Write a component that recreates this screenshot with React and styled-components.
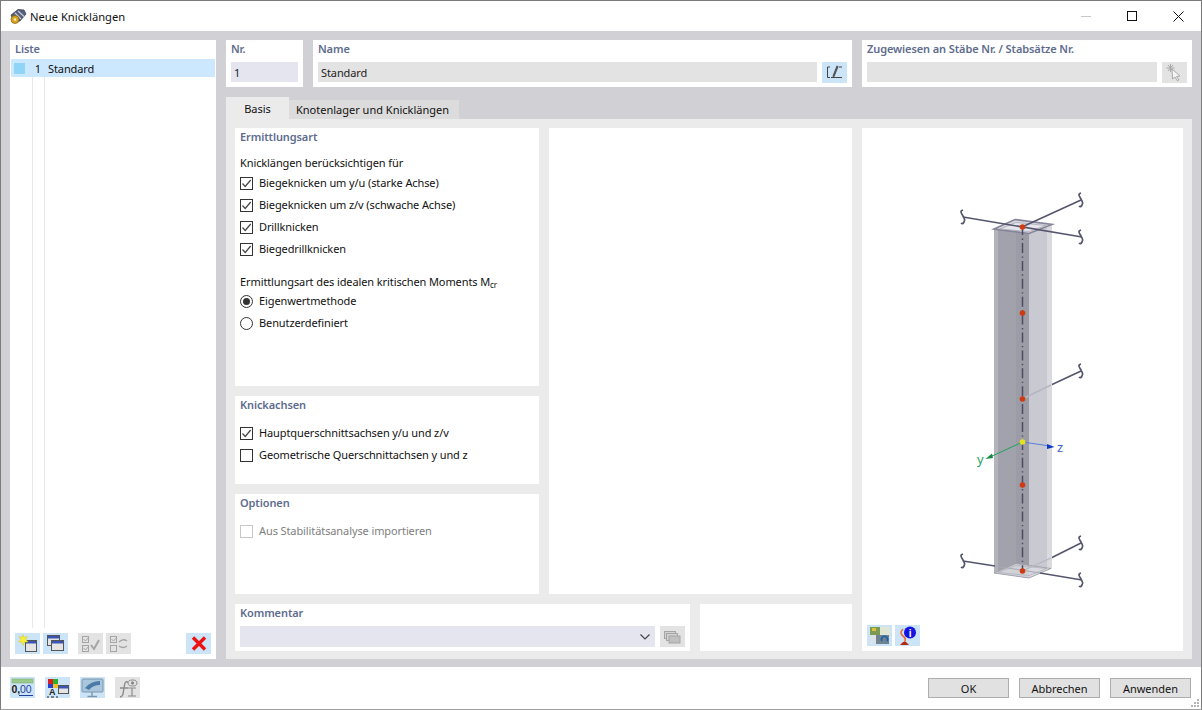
import styled, { createGlobalStyle } from "styled-components";

const Global = createGlobalStyle`
  html, body { margin: 0; padding: 0; background: #fff; }
  * { box-sizing: border-box; }
`;

const Win = styled.div`
  width: 1202px;
  height: 710px;
  position: relative;
  display: flex;
  flex-direction: column;
  overflow: hidden;
  background: #fff;
  border: 1px solid #7c7c7c;
  border-bottom-color: #a0a0a0;
  font-family: "Noto Sans", sans-serif;
  font-size: 11px;
  letter-spacing: -0.1px;
  color: #111;
`;

const TitleBar = styled.div`
  height: 30px;
  display: flex;
  align-items: center;
  padding-left: 8px;
  gap: 3px;
  font-size: 11.2px;
  letter-spacing: 0;
`;

const WinButtons = styled.div`
  margin-left: auto;
  display: flex;
`;

const WinButton = styled.div`
  width: 46px;
  height: 30px;
  display: flex;
  align-items: center;
  justify-content: center;
`;

const Body = styled.div`
  height: 636px;
  background: #d0d0d5;
  padding: 9px 9px 8px;
  display: grid;
  grid-template-columns: 206px 1fr;
  gap: 10px;
`;

const Panel = styled.div`
  background: #fff;
  position: relative;
  display: flex;
  flex-direction: column;
`;

const ListPanel = styled(Panel)`
  padding: 1px;
`;

const Caption = styled.div`
  color: #5e6c8e;
  font-weight: 600;
  height: 17px;
  line-height: 17px;
  padding-left: 5px;
  white-space: nowrap;
`;

const ListCaption = styled(Caption)`
  height: 15px;
  line-height: 15px;
  margin-bottom: 3px;
  padding-left: 4px;
`;

const ListBody = styled.div`
  flex: 1;
  display: flex;
  flex-direction: column;
  background: linear-gradient(#e8e8e8, #e8e8e8) 21px 0 / 1px 569px no-repeat,
    linear-gradient(#e8e8e8, #e8e8e8) 33px 0 / 1px 569px no-repeat;
`;

const ListRow = styled.div`
  height: 18px;
  background: #cce8ff;
  display: flex;
  align-items: center;
  padding-left: 3px;
`;

const Swatch = styled.span`
  width: 11px;
  height: 11px;
  background: #90d5f7;
`;

const RowNo = styled.span`
  width: 16px;
  text-align: right;
  margin-right: 7px;
`;

const ListTools = styled.div`
  height: 21px;
  margin: 0 4px 4px;
  display: flex;
  gap: 3px;
`;

const IconBtn = styled.div`
  width: 25px;
  height: 21px;
  flex: none;
  display: flex;
  align-items: center;
  justify-content: center;
  background: ${(p) => (p.$off ? "#e3e3e3" : "#cbe4f8")};
  margin-left: ${(p) => p.$gap || 0}px;
`;

const Main = styled.div`
  display: flex;
  flex-direction: column;
  min-width: 0;
`;

const HeadRow = styled.div`
  display: grid;
  grid-template-columns: 77px 539px 330px;
  gap: 10px;
  height: 47px;
`;

const FieldRow = styled.div`
  display: flex;
  gap: 5px;
  padding: 0 5px;
`;

const Input = styled.div`
  flex: 1;
  height: 20px;
  line-height: 21px;
  padding-left: 3px;
  background: ${(p) => (p.$tint ? "#e5e5ef" : "#e3e3e3")};
  color: #222;
  margin-top: 5px;
`;

const HeadBtn = styled(IconBtn)`
  margin-top: 5px;
`;

const TabStrip = styled.div`
  display: flex;
  align-items: flex-end;
  height: 22px;
  margin-top: 10px;
`;

const Tab = styled.div`
  height: ${(p) => (p.$active ? 22 : 19)}px;
  width: ${(p) => (p.$active ? 63 : 170)}px;
  padding-right: ${(p) => (p.$active ? 0 : 3)}px;
  background: ${(p) => (p.$active ? "#ebebeb" : "#dcdcdc")};
  letter-spacing: 0;
  display: flex;
  align-items: center;
  justify-content: center;
`;

const TabPage = styled.div`
  flex: 1;
  background: #ebebeb;
  padding: 9px 9px 8px;
  display: grid;
  grid-template-columns: 304px 303px 321px;
  grid-template-rows: 258px 88px 100px 47px;
  column-gap: 10px;
  row-gap: 10px;
`;

const CenterBlank = styled(Panel)`
  grid-column: 2;
  grid-row: 1 / 4;
`;

const Preview = styled(Panel)`
  grid-column: 3;
  grid-row: 1 / 5;
`;

const CommentPanel = styled.div`
  grid-column: 1 / 3;
  grid-row: 4;
  display: grid;
  grid-template-columns: 455px 152px;
  gap: 10px;
`;

const Options = styled.div`
  display: flex;
  flex-direction: column;
  padding: ${(p) => p.$top || 0}px 0 0 5px;
`;

const Label = styled.div`
  height: 16px;
  line-height: 16px;
  white-space: nowrap;
  margin-top: ${(p) => p.$gap || 0}px;
  margin-bottom: ${(p) => p.$after || 0}px;
`;

const Choice = styled.div`
  height: 22px;
  padding-bottom: 2px;
  display: flex;
  align-items: center;
  gap: 6px;
  white-space: nowrap;
  color: ${(p) => (p.$off ? "#7e7e7e" : "inherit")};
`;

const Box = styled.span`
  width: 13px;
  height: 13px;
  flex: none;
  margin-bottom: -2px;
  border: 1px solid ${(p) => (p.$off ? "#c8c8c8" : "#333")};
  display: flex;
  align-items: center;
  justify-content: center;
`;

const Radio = styled(Box)`
  border-radius: 50%;
`;

const Dot = styled.span`
  width: 7px;
  height: 7px;
  border-radius: 50%;
  background: #333;
`;

const Sub = styled.sub`
  font-size: 8px;
  line-height: 0;
  vertical-align: -2px;
`;

const Combo = styled(Input)`
  height: 21px;
  margin-top: 5px;
  display: flex;
  align-items: center;
  justify-content: flex-end;
  padding-right: 5px;
`;

const DrawArea = styled.svg`
  display: block;
  flex: 1;
  width: 321px;
  height: 496px;
`;

const PreviewTools = styled.div`
  display: flex;
  gap: 3px;
  padding: 1px 5px 5px;
  height: 27px;
`;

const Footer = styled.div`
  flex: 1;
  display: flex;
  align-items: center;
  padding: 0 10px 1px 9px;
  gap: 10px;
`;

const FootBtn = styled.button`
  width: 81px;
  height: 20px;
  padding: 0;
  margin-top: 1px;
  font: inherit;
  letter-spacing: 0;
  color: #111;
  background: #e1e1e1;
  border: 1px solid #adadad;
  margin-left: ${(p) => (p.$first ? "auto" : "0")};
`;

const Grip = styled.svg`
  position: absolute;
  right: 1px;
  bottom: 1px;
`;

const Check = () => (
  <svg width="11" height="11" viewBox="0 0 11 11">
    <path d="M1.5 5.5 L4.2 8.5 L9.7 2" fill="none" stroke="#444" strokeWidth="1.2" />
  </svg>
);

const CheckItem = ({ children, off, on = true }) => (
  <Choice $off={off}>
    <Box $off={off}>{on && !off && <Check />}</Box>
    {children}
  </Choice>
);

const WinGlyph = ({ x = 0, y = 0, w = 14, h = 12 }) => (
  <g>
    <rect x={x} y={y} width={w} height={h} fill="#e4e4e4" stroke="#555" />
    <rect x={x + 0.5} y={y + 0.5} width={w - 1} height="2.5" fill="#3b55b5" />
  </g>
);

const NewIcon = () => (
  <svg width="20" height="19" viewBox="0 0 20 19">
    <WinGlyph x={7.5} y={6.5} w={11} h={11} />
    <path d="M5 0.5 L6.2 3.5 L9.5 2.5 L7.8 5.5 L10 8 L6.7 8 L5 11.5 L3.8 8 L0.5 8 L2.8 5.5 L1 2.5 L4 3.5 Z" fill="#f7ee3c" stroke="#d8c820" strokeWidth=".5" />
  </svg>
);

const CopyIcon = () => (
  <svg width="20" height="19" viewBox="0 0 20 19">
    <WinGlyph x={1.5} y={1.5} w={12} h={10} />
    <WinGlyph x={5.5} y={6.5} w={12} h={10} />
  </svg>
);

const CheckAllIcon = () => (
  <svg width="20" height="19" viewBox="0 0 20 19" fill="none" stroke="#a5a5a5">
    <rect x="1.5" y="2.5" width="6" height="6" />
    <rect x="1.5" y="11.5" width="6" height="6" />
    <path d="M2.5 5 L4.5 7 L8 3 M2.5 14 L4.5 16 L8 12" />
    <path d="M10 11 L13 15 L18 6" strokeWidth="2" />
  </svg>
);

const CheckSwapIcon = () => (
  <svg width="20" height="19" viewBox="0 0 20 19" fill="none" stroke="#a5a5a5">
    <rect x="1.5" y="2.5" width="6" height="6" />
    <rect x="1.5" y="11.5" width="6" height="6" />
    <path d="M2.5 5 L4.5 7 L8 3" />
    <path d="M10 8 Q14 4 18 7 M18 12 Q14 15 10 12" strokeWidth="1.4" />
  </svg>
);

const DeleteIcon = () => (
  <svg width="16" height="15" viewBox="0 0 16 15">
    <path d="M2 1.5 L14 13.5 M14 1.5 L2 13.5" stroke="#ee1111" strokeWidth="3.4" />
  </svg>
);

const EditIcon = () => (
  <svg width="17" height="15" viewBox="0 0 17 15" fill="none">
    <path d="M4 2 H1.5 V12.5 H4 M5 12.5 H16 M13 2 H16" stroke="#444" />
    <path d="M6.6 10.8 L10.6 0.6 L12.6 1.4 L8.6 11.6 L6.8 12.4 Z" fill="#555" />
  </svg>
);

const PickIcon = () => (
  <svg width="17" height="17" viewBox="0 0 17 17">
    <path d="M2 1 L7 7 M7 1 L2 7 M4.5 0 V8 M0.5 4 H8.5" stroke="#a8a8a8" />
    <path d="M6 5 L14 12 L10.5 12.5 L13 16 L11 16.5 L9 13 L6.5 15 Z" fill="#f4f4f4" stroke="#aaa" />
  </svg>
);

const StackIcon = () => (
  <svg width="17" height="17" viewBox="0 0 17 17" fill="#d2d2d2" stroke="#a5a5a5">
    <rect x="0.5" y="3.5" width="11" height="7" />
    <rect x="2.5" y="5.5" width="11" height="7" />
    <rect x="5" y="8" width="11" height="7" fill="#c0c0c0" />
  </svg>
);

const RulerIcon = () => (
  <svg width="23" height="19" viewBox="0 0 23 19">
    <rect x="1" y="1" width="21" height="4" fill="#9bc98a" stroke="#7fae6c" strokeWidth=".6" />
    <text x="0.5" y="15" fontFamily="Liberation Sans, sans-serif" fontWeight="700" fontSize="10.5" fill="#222">0,</text>
    <text x="9" y="15" fontFamily="Liberation Sans, sans-serif" fontSize="10.5" fill="#1f3f9a">00</text>
    <path d="M8 17.5 H22" stroke="#1f3f9a" />
  </svg>
);

const ColorsIcon = () => (
  <svg width="24" height="20" viewBox="0 0 24 20">
    <rect x="2" y="1" width="5" height="5" fill="#d92020" />
    <rect x="7" y="1" width="5" height="5" fill="#2bb02b" />
    <rect x="2" y="6" width="5" height="4" fill="#2a3fd0" />
    <rect x="7" y="6" width="5" height="4" fill="#f0c020" />
    <text x="3" y="17" fontFamily="Liberation Sans, sans-serif" fontWeight="700" fontSize="9" fill="#222">A</text>
    <path d="M1 19 H3 M5 19 H8 M10 19 H12" stroke="#222" />
    <WinGlyph x={12.5} y={7.5} w={10} h={8} />
  </svg>
);

const MonitorIcon = () => (
  <svg width="23" height="20" viewBox="0 0 23 20">
    <rect x="1" y="1" width="21" height="13" rx="1" fill="#a9c6dc" stroke="#7d96aa" />
    <path d="M4 10 Q10 3 19 3 L19 7 Q12 7 8 12 Z" fill="#4a7aa8" />
    <path d="M11 14 V18 M6.5 18.5 H16" stroke="#7d96aa" strokeWidth="1.4" />
  </svg>
);

const FormulaIcon = () => (
  <svg width="23" height="20" viewBox="0 0 23 20" fill="none" stroke="#8b8b8b">
    <path d="M4 19 Q7 19 7.5 13 L8.5 7 Q9 3 12 4 M4 10 H12" strokeWidth="1.4" />
    <path d="M12 10 H20 M16 10 V18 M12 18 H20" strokeWidth="1.2" />
    <ellipse cx="16.5" cy="5" rx="4.5" ry="3" />
    <circle cx="16.5" cy="5" r="1.2" fill="#8b8b8b" />
  </svg>
);

const ViewIcon = () => (
  <svg width="22" height="19" viewBox="0 0 22 19">
    <rect x="1" y="1" width="10" height="8" fill="#7d9a55" />
    <rect x="3" y="2" width="4" height="3" fill="#d9c23a" />
    <rect x="11" y="1" width="10" height="8" fill="#dfe6d4" />
    <rect x="1" y="9" width="10" height="9" fill="#dbe3ea" />
    <rect x="7" y="9" width="13" height="9" fill="#6f8391" />
    <path d="M13 15 a3 3 0 1 1 5 0" fill="none" stroke="#1d5fa8" strokeWidth="1.6" />
  </svg>
);

const InfoIcon = () => (
  <svg width="22" height="20" viewBox="0 0 22 20">
    <path d="M6 3 Q2 7 6 10 Q10 13 7 17" fill="none" stroke="#ef6a3a" strokeWidth="1.6" />
    <path d="M3 19 H12 L9 16 H6 Z" fill="#b32a12" />
    <circle cx="13" cy="6.5" r="6" fill="#1414e0" />
    <text x="13" y="10.5" textAnchor="middle" fontFamily="Liberation Sans, sans-serif" fontWeight="700" fontSize="10" fill="#fff">i</text>
  </svg>
);

const AppIcon = () => (
  <svg width="18" height="17" viewBox="0 0 18 17">
    <path d="M2 7 L9 1.5 L15 2 L17 6 L11 13 L5 14 Z" fill="#55607a" stroke="#2f3750" strokeWidth=".7" />
    <path d="M6 5 L12 11 M9 3 L15 8.5" stroke="#c4cad8" strokeWidth="1.3" />
    <circle cx="6" cy="11.5" r="4" fill="#d9a520" stroke="#7a5a10" strokeWidth=".7" />
    <circle cx="6" cy="11.5" r="1.3" fill="#f6e9b8" />
  </svg>
);

// break mark at the end of a support line
const Squiggle = ({ x, y }) => (
  <path
    d={`M${x - 1} ${y - 7} c-4 1 -1 4 0 6 c1 3 3 3 1 6 c-1 2 -2 2 -3 1`}
    fill="none"
    stroke="#55566e"
    strokeWidth="1.7"
  />
);

const Line = ({ d, w = 1.6, c = "#55566e" }) => <path d={d} fill="none" stroke={c} strokeWidth={w} />;

const Node = ({ y, c = "#cf3a10" }) => <circle cx="1022.5" cy={y} r="2.8" fill={c} />;

const ColumnDrawing = () => (
  <DrawArea viewBox="862 128 321 496" preserveAspectRatio="xMidYMin meet">
    {/* supports behind the column */}
    <Line d="M1051 385 L1081 371" />
    <Squiggle x={1082} y={371} />
    <Line d="M1051 558 L1081 543" />
    <Squiggle x={1082} y={543} />

    {/* column faces */}
    <path d="M994 229 L1029 233 L1029 578 L994 573 Z" fill="#a2a2ad" />
    <path d="M994 229 L998 229.5 L998 573.5 L994 573 Z" fill="#b3b3bb" />
    <path d="M1016 231 L1029 233 L1029 578 L1016 576 Z" fill="#9c9ca7" />
    <path d="M1029 233 L1052 224 L1052 568 L1029 578 Z" fill="#c9c9d1" />
    <path d="M1047 226 L1052 224 L1052 568 L1047 570 Z" fill="#d9d9de" />

    {/* top cap */}
    <path d="M994 229 L1015 219.5 L1052 224.5 L1029 233.5 Z" fill="#d6d6de" stroke="#85859a" strokeWidth="1.6" />
    <path d="M1000 229 L1016 222.5 L1046 225.5 L1029 231.5 Z" fill="#e6e6ec" stroke="#a5a5b2" strokeWidth=".7" />

    {/* bottom cap */}
    <path d="M994 573 L1016 563.5 L1051 568.5 L1029 578 Z" fill="#dadae0" fillOpacity=".85" stroke="#9a9aa6" strokeWidth=".8" />
    <path d="M998 572.5 L1016 565.5 L1047 568.5 L1029 575.5 Z" fill="none" stroke="#a8a8b2" strokeWidth=".6" />

    {/* supports in front */}
    <Line d="M1022 227 L1081 200" />
    <Squiggle x={1082} y={200} />
    <Line d="M963 217 L1082 237" />
    <Squiggle x={964} y={217} />
    <Squiggle x={1082} y={237} />
    <Line d="M963 561 L995 566" />
    <Line d="M995 566 L1040 573" w={1} c="#a9a9b4" />
    <Line d="M1040 573 L1082 580" />
    <Squiggle x={964} y={561} />
    <Squiggle x={1082} y={580} />
    <Line d="M1022 399 L1051 385" w={1.4} c="#b6b6c0" />
    <Line d="M1022 571 L1051 558" w={1.2} c="#b6b6c0" />

    {/* member axis */}
    <path d="M1022.5 225.1 V571" fill="none" stroke="#4c4d62" strokeWidth="1.5" strokeDasharray="10 3.4 1.4 3.1" />

    {/* local axes */}
    <Line d="M1022.5 442 L990 457" w={1} c="#1fa35c" />
    <path d="M985.5 459 L992 453.5 L993 458 Z" fill="#128a3e" />
    <Line d="M1022.5 442 L1050 446" w={1} c="#5a7fd8" />
    <path d="M1054.5 447 L1047 444 L1047 449 Z" fill="#1038c8" />

    <Node y={227} />
    <Node y={313} />
    <Node y={399} />
    <Node y={442} c="#e8df20" />
    <Node y={485} />
    <Node y={571} />

    <text x="977" y="464" fontFamily="Noto Sans, sans-serif" fontSize="13" fill="#1fa35c">y</text>
    <text x="1057" y="452" fontFamily="Noto Sans, sans-serif" fontSize="13" fill="#3a62cc">z</text>
  </DrawArea>
);

export default function App() {
  return (
    <>
      <Global />
      <Win>
        <TitleBar>
          <AppIcon />
          Neue Knicklängen
          <WinButtons>
            <WinButton>
              <svg width="11" height="11"><path d="M0 5.5 H10" stroke="#c8c8c8" /></svg>
            </WinButton>
            <WinButton>
              <svg width="11" height="11"><rect x=".5" y=".5" width="9" height="9" fill="none" stroke="#111" /></svg>
            </WinButton>
            <WinButton>
              <svg width="11" height="11"><path d="M.5 .5 L10.5 10.5 M10.5 .5 L.5 10.5" stroke="#111" /></svg>
            </WinButton>
          </WinButtons>
        </TitleBar>

        <Body>
          <ListPanel>
            <ListCaption>Liste</ListCaption>
            <ListBody>
              <ListRow>
                <Swatch />
                <RowNo>1</RowNo>
                Standard
              </ListRow>
            </ListBody>
            <ListTools>
              <IconBtn><NewIcon /></IconBtn>
              <IconBtn><CopyIcon /></IconBtn>
              <IconBtn $off $gap={7}><CheckAllIcon /></IconBtn>
              <IconBtn $off><CheckSwapIcon /></IconBtn>
              <IconBtn $gap={52}><DeleteIcon /></IconBtn>
            </ListTools>
          </ListPanel>

          <Main>
            <HeadRow>
              <Panel>
                <Caption>Nr.</Caption>
                <FieldRow>
                  <Input $tint>1</Input>
                </FieldRow>
              </Panel>
              <Panel>
                <Caption>Name</Caption>
                <FieldRow>
                  <Input>Standard</Input>
                  <HeadBtn><EditIcon /></HeadBtn>
                </FieldRow>
              </Panel>
              <Panel>
                <Caption>Zugewiesen an Stäbe Nr. / Stabsätze Nr.</Caption>
                <FieldRow>
                  <Input />
                  <HeadBtn $off><PickIcon /></HeadBtn>
                </FieldRow>
              </Panel>
            </HeadRow>

            <TabStrip>
              <Tab $active>Basis</Tab>
              <Tab>Knotenlager und Knicklängen</Tab>
            </TabStrip>

            <TabPage>
              <Panel>
                <Caption>Ermittlungsart</Caption>
                <Options $top={10}>
                  <Label $after={1}>Knicklängen berücksichtigen für</Label>
                  <CheckItem>Biegeknicken um y/u (starke Achse)</CheckItem>
                  <CheckItem>Biegeknicken um z/v (schwache Achse)</CheckItem>
                  <CheckItem>Drillknicken</CheckItem>
                  <CheckItem>Biegedrillknicken</CheckItem>
                  <Label $gap={14}>Ermittlungsart des idealen kritischen Moments M<Sub>cr</Sub></Label>
                  <Choice><Radio><Dot /></Radio>Eigenwertmethode</Choice>
                  <Choice><Radio />Benutzerdefiniert</Choice>
                </Options>
              </Panel>
              <CenterBlank />
              <Preview>
                <ColumnDrawing />
                <PreviewTools>
                  <IconBtn><ViewIcon /></IconBtn>
                  <IconBtn><InfoIcon /></IconBtn>
                </PreviewTools>
              </Preview>
              <Panel>
                <Caption>Knickachsen</Caption>
                <Options $top={9}>
                  <CheckItem>Hauptquerschnittsachsen y/u und z/v</CheckItem>
                  <CheckItem on={false}>Geometrische Querschnittachsen y und z</CheckItem>
                </Options>
              </Panel>
              <Panel>
                <Caption>Optionen</Caption>
                <Options $top={9}>
                  <CheckItem off>Aus Stabilitätsanalyse importieren</CheckItem>
                </Options>
              </Panel>
              <CommentPanel>
                <Panel>
                  <Caption>Kommentar</Caption>
                  <FieldRow>
                    <Combo $tint>
                      <svg width="10" height="6"><path d="M.5 .5 L5 5 L9.5 .5" fill="none" stroke="#444" strokeWidth="1.2" /></svg>
                    </Combo>
                    <HeadBtn $off><StackIcon /></HeadBtn>
                  </FieldRow>
                </Panel>
                <Panel />
              </CommentPanel>
            </TabPage>
          </Main>
        </Body>

        <Footer>
          <IconBtn><RulerIcon /></IconBtn>
          <IconBtn><ColorsIcon /></IconBtn>
          <IconBtn><MonitorIcon /></IconBtn>
          <IconBtn $off><FormulaIcon /></IconBtn>
          <FootBtn $first>OK</FootBtn>
          <FootBtn>Abbrechen</FootBtn>
          <FootBtn>Anwenden</FootBtn>
        </Footer>
        <Grip width="10" height="10" viewBox="0 0 10 10" fill="#b4b4b4">
          <rect x="7" y="1" width="2" height="2" />
          <rect x="4" y="4" width="2" height="2" />
          <rect x="7" y="4" width="2" height="2" />
          <rect x="1" y="7" width="2" height="2" />
          <rect x="4" y="7" width="2" height="2" />
          <rect x="7" y="7" width="2" height="2" />
        </Grip>
      </Win>
    </>
  );
}
